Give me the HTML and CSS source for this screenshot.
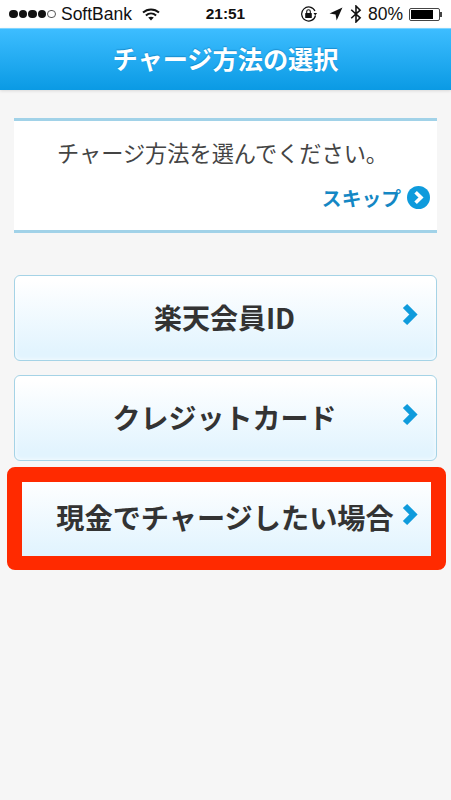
FILE: index.html
```html
<!DOCTYPE html>
<html lang="ja">
<head>
<meta charset="utf-8">
<title>チャージ方法の選択</title>
<link rel="stylesheet" href="styles.css">
</head>
<body>
<div class="status">
  <div class="status-left">
    <span class="signal"><i class="dot"></i><i class="dot"></i><i class="dot"></i><i class="dot"></i><i class="dot empty"></i></span>
    <span class="carrier">SoftBank</span>
    <svg class="wifi" width="18" height="13" viewBox="0 0 18 13"><path d="M1 4.6C5.6.3 12.4.3 17 4.6" fill="none" stroke="#111" stroke-width="2"/><path d="M3.9 7.4c3-2.7 7.2-2.7 10.2 0" fill="none" stroke="#111" stroke-width="2"/><path d="M6.2 9.6c1.7-1.3 3.9-1.3 5.6 0L9 12.6z" fill="#111"/></svg>
  </div>
  <div class="time">21:51</div>
  <div class="status-right">
    <svg class="rotlock" width="18" height="16" viewBox="0 0 18 16"><path d="M15.5 9.5A7 7 0 1 1 15 5" fill="none" stroke="#111" stroke-width="1.2"/><path d="M13.5 7h3.6l-1.8 2.4z" fill="#111"/><rect x="5.2" y="7" width="6.6" height="5" rx=".6" fill="#111"/><path d="M6.7 7V5.6a1.8 1.8 0 0 1 3.6 0V7" fill="none" stroke="#111" stroke-width="1.1"/></svg>
    <svg class="arrow" width="14" height="14" viewBox="0 0 13 13"><path d="M12.5.5L.5 6l5.6 1 1 5.6z" fill="#111"/></svg>
    <svg width="12" height="18" viewBox="0 0 11 17"><path d="M1 4.5l8.4 7.6L5.5 16V1l3.9 3.9L1 12.5" fill="none" stroke="#111" stroke-width="1.5"/></svg>
    <span class="pct">80%</span>
    <span class="battery"><span class="battery-fill"></span></span>
  </div>
</div>
<header class="bar">チャージ方法の選択</header>
<main class="content">
  <section class="card">
    <p class="lead">チャージ方法を選んでください。</p>
    <a class="skip">スキップ
      <svg width="23" height="23" viewBox="0 0 23 23"><circle cx="11.5" cy="11.5" r="11.5" fill="#0f9bdc"/><path d="M8.6 6.2l5.4 5.3-5.4 5.3" fill="none" stroke="#fff" stroke-width="3.6"/></svg>
    </a>
  </section>
  <nav class="menu">
    <a class="item"><span class="label">楽天会員ID</span><svg class="chev" width="17" height="23" viewBox="0 0 17 23"><path d="M3 3l8.4 8.5L3 20" fill="none" stroke="#0f9bdc" stroke-width="6"/></svg></a>
    <a class="item"><span class="label">クレジットカード</span><svg class="chev" width="17" height="23" viewBox="0 0 17 23"><path d="M3 3l8.4 8.5L3 20" fill="none" stroke="#0f9bdc" stroke-width="6"/></svg></a>
    <a class="item last"><span class="label">現金でチャージしたい場合</span><svg class="chev" width="17" height="23" viewBox="0 0 17 23"><path d="M3 3l8.4 8.5L3 20" fill="none" stroke="#0f9bdc" stroke-width="6"/></svg><span class="highlight"></span></a>
  </nav>
</main>
</body>
</html>
```
FILE: styles.css
```css
* { box-sizing: border-box; }
html, body { margin: 0; padding: 0; }
body {
  width: 451px;
  height: 800px;
  overflow: hidden;
  background: #f6f6f6;
  font-family: "Noto Sans CJK JP", "Liberation Sans", sans-serif;
  color: #333;
}
.status {
  height: 28px;
  background: #fff;
  display: grid;
  grid-template-columns: 1fr auto 1fr;
  align-items: center;
  padding: 0 9px 0 9px;
  font-family: "Liberation Sans", sans-serif;
  color: #111;
}
.status-left { display: flex; align-items: center; }
.signal { display: flex; gap: 1px; }
.dot { width: 8.6px; height: 8.6px; border-radius: 50%; background: #111; }
.dot.empty { background: #fff; border: 1px solid #555; }
.carrier { font-size: 17.5px; margin-left: 5px; }
.wifi { margin-left: 10px; }
.time { font-size: 15.4px; font-weight: 700; }
.status-right { display: flex; align-items: center; justify-content: flex-end; gap: 7px; }
.rotlock { margin-right: 2px; }
.arrow { margin-left: 2px; }
.pct { font-size: 17.5px; margin-left: -1px; }
.battery {
  width: 31px;
  height: 13px;
  border: 1px solid #444;
  border-radius: 2px;
  padding: 1px;
  margin-left: -1px;
  margin-right: 2px;
  position: relative;
  display: flex;
}
.battery::after {
  content: "";
  position: absolute;
  right: -3px;
  top: 3px;
  width: 2px;
  height: 5px;
  background: #444;
}
.battery-fill { width: 80%; background: #000; }
.bar {
  height: 62px;
  display: flex;
  align-items: center;
  justify-content: center;
  padding-bottom: 2px;
  background: linear-gradient(#3dbdff, #0a9ae4);
  border-top: 1px solid #7fd4ff;
  box-shadow: 0 1px 3px rgba(0,0,0,.12);
  color: #fff;
  font-size: 25.2px;
  font-weight: 700;
  line-height: 1;
  text-shadow: 0 -1px 1px rgba(0,90,150,.4);
}
.content { padding: 28px 14px 0; }
.card {
  height: 115px;
  background: #fff;
  border-top: 3px solid #a1d2e8;
  border-bottom: 3px solid #a1d2e8;
  display: flex;
  flex-direction: column;
}
.lead {
  margin: 15px 0 0;
  padding-left: 43px;
  font-size: 22.2px;
  line-height: 32px;
  color: #444;
  white-space: nowrap;
}
.skip {
  margin: 18px 7px 0 0;
  align-self: flex-end;
  display: flex;
  align-items: center;
  gap: 6px;
  color: #1487c4;
  font-size: 19.8px;
  font-weight: 700;
  line-height: 23px;
}
.menu {
  margin-top: 42px;
  display: flex;
  flex-direction: column;
  gap: 14px;
}
.item {
  position: relative;
  height: 86px;
  display: flex;
  align-items: center;
  border: 1.5px solid #a5d3e6;
  border-radius: 6px;
  background: linear-gradient(#fff 5%, #e2f4fe 90%);
  box-shadow: inset 0 0 4px rgba(255,255,255,.9);
}
.label {
  flex: 1;
  text-align: center;
  font-size: 28px;
  font-weight: 700;
  color: #333;
  line-height: 40px;
  padding: 0 2px 3px 0;
  white-space: nowrap;
}
.chev { position: absolute; right: 17px; top: 27px; }
.item.last .label { padding-right: 1px; font-size: 28.2px; }
.highlight {
  position: absolute;
  left: -8px;
  top: -9px;
  width: 439px;
  height: 103px;
  border: solid #ff2a00;
  border-width: 15px 15px 14px 15px;
  border-radius: 8px;
}
```
